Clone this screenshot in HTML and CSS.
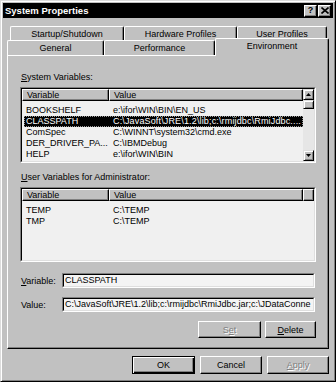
FILE: index.html
```html
<!DOCTYPE html>
<html lang="en">
<head>
    <meta charset="UTF-8">
    <title>System Properties</title>
    <link rel="stylesheet" href="styles.css">
</head>
<body>
<div class="window">
    <div class="titlebar">
        <span class="title">System Properties</span>
        <div class="caption-buttons">
            <span class="cap-btn">?</span>
            <span class="cap-btn">
                <svg width="8" height="7" viewBox="0 0 8 7"><path d="M0.5 0.5 L7.5 6.5 M7.5 0.5 L0.5 6.5" stroke="#000" stroke-width="1.6"/></svg>
            </span>
        </div>
    </div>
    <div class="content">
        <div class="tab-row back">
            <div class="tab w-startup">Startup/Shutdown</div>
            <div class="tab w-hardware">Hardware Profiles</div>
            <div class="tab w-users">User Profiles</div>
        </div>
        <div class="tab-row front">
            <div class="tab w-general">General</div>
            <div class="tab w-perf">Performance</div>
            <div class="tab w-env selected">Environment</div>
        </div>
        <div class="panel">
            <div class="group-label"><u>S</u>ystem Variables:</div>
            <div class="listview system">
                <div class="listview-in">
                    <div class="list-main">
                        <div class="list-header">
                            <div class="col-head c-var">Variable</div>
                            <div class="col-head c-val">Value</div>
                        </div>
                        <div class="list-rows">
                            <div class="row"><span class="c-var">BOOKSHELF</span><span class="c-val">e:\ifor\WIN\BIN\EN_US</span></div>
                            <div class="row selected"><span class="c-var">CLASSPATH</span><span class="c-val">C:\JavaSoft\JRE\1.2\lib;c:\rmijdbc\RmiJdbc....</span></div>
                            <div class="row"><span class="c-var">ComSpec</span><span class="c-val">C:\WINNT\system32\cmd.exe</span></div>
                            <div class="row"><span class="c-var">DER_DRIVER_PA...</span><span class="c-val">C:\IBMDebug</span></div>
                            <div class="row"><span class="c-var">HELP</span><span class="c-val">e:\ifor\WIN\BIN</span></div>
                        </div>
                    </div>
                    <div class="scrollbar">
                        <div class="sb-btn"><svg width="5" height="3" viewBox="0 0 5 3"><polygon points="2.5,0 5,3 0,3" fill="#000"/></svg></div>
                        <div class="sb-thumb"></div>
                        <div class="sb-track"></div>
                        <div class="sb-btn"><svg width="5" height="3" viewBox="0 0 5 3"><polygon points="0,0 5,0 2.5,3" fill="#000"/></svg></div>
                    </div>
                </div>
            </div>

            <div class="group-label user"><u>U</u>ser Variables for Administrator:</div>
            <div class="listview user">
                <div class="listview-in">
                    <div class="list-main">
                        <div class="list-header">
                            <div class="col-head c-var">Variable</div>
                            <div class="col-head c-val">Value</div>
                            <div class="col-head filler"></div>
                        </div>
                        <div class="list-rows">
                            <div class="row"><span class="c-var">TEMP</span><span class="c-val">C:\TEMP</span></div>
                            <div class="row"><span class="c-var">TMP</span><span class="c-val">C:\TEMP</span></div>
                        </div>
                    </div>
                </div>
            </div>

            <div class="field first">
                <span class="field-label"><u>V</u>ariable:</span>
                <div class="textbox"><div class="textbox-in">CLASSPATH</div></div>
            </div>
            <div class="field">
                <span class="field-label">Value:</span>
                <div class="textbox"><div class="textbox-in">C:\JavaSoft\JRE\1.2\lib;c:\rmijdbc\RmiJdbc.jar;c:\JDataConne</div></div>
            </div>
            <div class="panel-buttons">
                <div class="btn disabled w-set">S<u>e</u>t</div>
                <div class="btn w-delete"><u>D</u>elete</div>
            </div>
        </div>
        <div class="dialog-buttons">
            <div class="btn default w-ok">OK</div>
            <div class="btn w-cancel">Cancel</div>
            <div class="btn disabled w-apply"><u>A</u>pply</div>
        </div>
    </div>
</div>
</body>
</html>
```

FILE: styles.css
```css
* {
    box-sizing: border-box;
}
html, body {
    margin: 0;
    padding: 0;
}
body {
    background: #c1c1c1;
    font-family: "Liberation Sans", Arial, sans-serif;
    font-size: 9px;
    color: #000;
}
.window {
    width: 336px;
    height: 382px;
    background: #c1c1c1;
    border: 1px solid;
    border-color: #dcdcdc #000 #000 #dcdcdc;
    box-shadow: inset 1px 1px 0 #fff, inset -1px -1px 0 #808080;
    padding: 2px;
}

/* title bar */
.titlebar {
    height: 15px;
    background: #000;
    color: #fff;
    display: flex;
    align-items: center;
    justify-content: space-between;
    padding: 0 2px;
}
.title {
    font-weight: bold;
    font-size: 9.5px;
}
.caption-buttons {
    display: flex;
    gap: 1px;
}
.cap-btn {
    width: 13px;
    height: 12px;
    background: #c1c1c1;
    border: 1px solid;
    border-color: #fff #000 #000 #fff;
    box-shadow: inset -1px -1px 0 #808080;
    display: flex;
    align-items: center;
    justify-content: center;
    color: #000;
    font-weight: bold;
    font-size: 9px;
    line-height: 1;
}

.content {
    padding: 8px 4px 0 4px;
}

/* tabs */
.tab-row {
    display: flex;
    height: 14px;
}
.tab-row.back {
    margin-left: 3px;
}
.tab-row.front {
    height: 15px;
}
.tab {
    height: 100%;
    background: #c1c1c1;
    border-top: 1px solid #fff;
    border-left: 1px solid #fff;
    border-right: 1px solid #000;
    box-shadow: inset -1px 0 0 #808080;
    border-radius: 2px 2px 0 0;
    display: flex;
    align-items: center;
    justify-content: center;
    white-space: nowrap;
}
.w-startup { width: 114px; }
.w-hardware { width: 113px; }
.w-users { width: 90px; }
.w-general { width: 97px; }
.w-perf { width: 111px; }
.w-env { width: 114px; }
.tab.selected {
    position: relative;
    z-index: 1;
    height: 18px;
    margin-top: -2px;
    padding-bottom: 3px;
}

/* tab page */
.panel {
    width: 322px;
    height: 294px;
    border: 1px solid;
    border-color: #fff #000 #000 #fff;
    box-shadow: inset -1px -1px 0 #808080;
    padding: 16px 12px 0 12px;
}
.group-label {
    line-height: 11px;
    padding-left: 1px;
}
.group-label.user {
    margin-top: 9px;
}
.listview {
    margin-top: 4px;
    width: 296px;
    height: 76px;
    border: 1px solid;
    border-color: #808080 #fff #fff #808080;
}
.listview.user {
    height: 75px;
}
.listview-in {
    height: 100%;
    display: flex;
    background: #f0f0f0;
    border: 1px solid;
    border-color: #000 #dfdfdf #dfdfdf #000;
}
.list-main {
    flex: 1;
    overflow: hidden;
}
.list-header {
    display: flex;
    height: 12px;
}
.col-head {
    height: 12px;
    flex-shrink: 0;
    background: #c1c1c1;
    border: 1px solid;
    border-color: #fff #000 #000 #fff;
    box-shadow: inset -1px -1px 0 #808080;
    padding-left: 4px;
    line-height: 10px;
}
.col-head.c-var { width: 87px; }
.col-head.c-val { width: 194px; }
.col-head.filler { width: 11px; }
.list-rows {
    padding-top: 4px;
}
.row {
    display: flex;
    height: 11px;
    line-height: 11px;
    margin-left: 2px;
    white-space: nowrap;
}
.row .c-var {
    width: 85px;
    padding-left: 2px;
    flex-shrink: 0;
}
.row .c-val {
    padding-left: 4px;
}
.row.selected {
    background: #000;
    color: #fff;
    outline: 1px dotted #9a9a9a;
    outline-offset: -1px;
}
.row.selected .c-val {
    letter-spacing: 0.15px;
}

/* scrollbar */
.scrollbar {
    width: 11px;
    display: flex;
    flex-direction: column;
    background: #e6e6e6;
}
.sb-btn,
.sb-thumb {
    background: #c1c1c1;
    border: 1px solid;
    border-color: #dfdfdf #000 #000 #dfdfdf;
    box-shadow: inset 1px 1px 0 #fff, inset -1px -1px 0 #808080;
}
.sb-btn {
    height: 11px;
    display: flex;
    align-items: center;
    justify-content: center;
}
.sb-btn svg {
    display: block;
}
.sb-thumb {
    height: 9px;
}
.sb-track {
    flex: 1;
}

/* edit fields */
.field {
    display: flex;
    align-items: center;
    margin-top: 9px;
}
.field.first {
    margin-top: 11px;
}
.field-label {
    width: 42px;
    padding-left: 1px;
}
.textbox {
    width: 253px;
    height: 15px;
    border: 1px solid;
    border-color: #808080 #fff #fff #808080;
}
.textbox-in {
    height: 100%;
    background: #f4f4f4;
    border: 1px solid;
    border-color: #000 #dfdfdf #dfdfdf #000;
    padding-left: 1px;
    line-height: 11px;
    white-space: nowrap;
    overflow: hidden;
}

/* buttons */
.panel-buttons {
    display: flex;
    justify-content: flex-end;
    gap: 4px;
    margin-top: 9px;
}
.dialog-buttons {
    display: flex;
    justify-content: flex-end;
    gap: 5px;
    margin-top: 7px;
}
.btn {
    height: 17px;
    background: #c1c1c1;
    border: 1px solid;
    border-color: #fff #000 #000 #fff;
    box-shadow: inset -1px -1px 0 #808080;
    display: flex;
    align-items: center;
    justify-content: center;
}
.dialog-buttons .btn {
    height: 18px;
}
.btn.default {
    border-color: #000;
    box-shadow: inset 1px 1px 0 #fff, inset -1px -1px 0 #000, inset -2px -2px 0 #808080;
}
.btn.disabled {
    color: #808080;
    text-shadow: 1px 1px 0 #fff;
}
.w-set { width: 63px; }
.w-delete { width: 51px; }
.w-ok { width: 63px; }
.w-cancel { width: 62px; }
.w-apply { width: 62px; }
```
